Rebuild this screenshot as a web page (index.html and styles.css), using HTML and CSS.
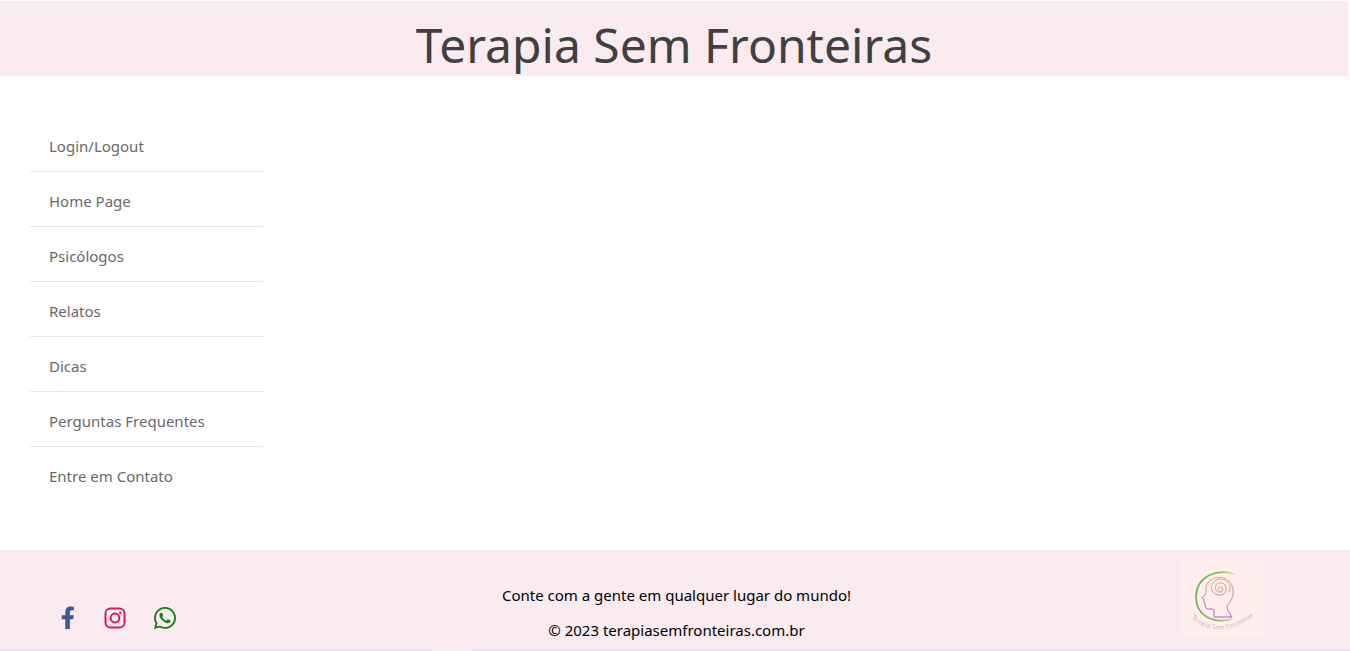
FILE: index.html
```html
<!DOCTYPE html>
<html lang="pt-BR">
<head>
<meta charset="utf-8">
<title>Terapia Sem Fronteiras</title>
<link rel="stylesheet" href="styles.css">
</head>
<body>
<header class="site-header"><h1 class="site-title">Terapia Sem Fronteiras</h1></header>
<main class="content">
  <nav class="menu">
    <a class="menu-link" href="#">Login/Logout</a>
    <a class="menu-link" href="#">Home Page</a>
    <a class="menu-link" href="#">Psicólogos</a>
    <a class="menu-link" href="#">Relatos</a>
    <a class="menu-link" href="#">Dicas</a>
    <a class="menu-link" href="#">Perguntas Frequentes</a>
    <a class="menu-link" href="#">Entre em Contato</a>
  </nav>
</main>
<footer class="site-footer">
  <div class="social">
    <a class="social-link facebook" href="#" aria-label="Facebook">
      <svg width="14" height="24" viewBox="0 0 14 24"><path fill="currentColor" d="M4.300 23V13.200H.7V9.200h3.600V6.100C4.300 2.500 6.400.5 9.700.5c1.500 0 3.200.3 3.200.3v3.500h-1.800c-1.800 0-2.300 1.100-2.300 2.200v2.700h4l-.6 4H8.800V23z"/></svg>
    </a>
    <a class="social-link" href="#" aria-label="Instagram">
      <svg class="instagram" width="22" height="22" viewBox="0 0 22 22"><g fill="none" stroke="currentColor" stroke-width="2"><rect x="1.500" y="1.500" width="19" height="19" rx="5"/><circle cx="11" cy="11" r="4.400"/></g><circle cx="16.300" cy="5.700" r="1.300" fill="currentColor"/></svg>
    </a>
    <a class="social-link" href="#" aria-label="WhatsApp">
      <svg class="whatsapp" width="22" height="22" viewBox="0 32 448 448"><path fill="currentColor" d="M380.900 97.100C339 55.100 283.200 32 223.900 32c-122.400 0-222 99.600-222 222 0 39.100 10.200 77.300 29.600 111L0 480l117.700-30.900c32.400 17.700 68.900 27 106.100 27h.1c122.300 0 224.100-99.600 224.100-222 0-59.300-25.200-115-67.100-157zm-157 341.600c-33.200 0-65.700-8.900-94-25.700l-6.700-4-69.800 18.300L72 359.200l-4.400-7c-18.500-29.400-28.200-63.300-28.200-98.200 0-101.700 82.800-184.500 184.600-184.500 49.300 0 95.600 19.200 130.400 54.100 34.800 34.900 56.200 81.200 56.100 130.500 0 101.800-84.900 184.600-186.600 184.600zm101.200-138.200c-5.500-2.800-32.800-16.200-37.900-18-5.100-1.900-8.800-2.800-12.500 2.800-3.700 5.600-14.300 18-17.600 21.800-3.200 3.700-6.500 4.200-12 1.400-32.600-16.300-54-29.100-75.500-66-5.700-9.800 5.700-9.100 16.300-30.300 1.800-3.700.9-6.900-.5-9.700-1.400-2.800-12.500-30.100-17.100-41.200-4.500-10.800-9.100-9.300-12.500-9.500-3.200-.2-6.900-.2-10.600-.2-3.700 0-9.700 1.400-14.800 6.900-5.100 5.600-19.400 19-19.400 46.300 0 27.300 19.900 53.700 22.600 57.400 2.800 3.700 39.100 59.700 94.800 83.800 35.200 15.200 49 16.500 66.600 13.900 10.700-1.600 32.800-13.400 37.400-26.400 4.600-13 4.600-24.100 3.200-26.400-1.300-2.500-5-3.900-10.500-6.600z"/></svg>
    </a>
  </div>
  <div class="footer-text">
    <p class="footer-line">Conte com a gente em qualquer lugar do mundo!</p>
    <p class="footer-line">© 2023 terapiasemfronteiras.com.br</p>
  </div>
  <svg class="logo" width="82" height="78" viewBox="0 0 82 78" role="img" aria-label="Terapia Sem Fronteiras">
    <defs>
      <linearGradient id="ring" gradientUnits="userSpaceOnUse" x1="14" x2="54" y1="0" y2="0"><stop offset="0" stop-color="#5cc04c"/><stop offset=".6" stop-color="#80c660"/><stop offset="1" stop-color="#f4dcc0"/></linearGradient>
      <linearGradient id="head" gradientUnits="userSpaceOnUse" x1="0" x2="0" y1="16" y2="58"><stop offset="0" stop-color="#deb267"/><stop offset=".5" stop-color="#c08799"/><stop offset="1" stop-color="#a05dce"/></linearGradient>
      <path id="arc" d="M9 58Q40 84 76 52"/>
    </defs>
    <rect width="82" height="78" fill="#ffeeed"/>
    <path d="M53 14C34 8 14 17 14 37c0 19 17 27 36 22" fill="none" stroke="url(#ring)" stroke-width="1.700"/>
    <g fill="none" stroke="url(#head)" stroke-width="1">
      <path d="M50 57l-3-5c-3-4-2-7 1-10 5-7 4-16-1-21-7-6-18-4-22 3-2 4 0 8-2 11l-3 3 2 1v3l1 1v3l2 3h6l1 2v6z"/>
      <path d="M37 30c-1-2 0-4 2-3 3 1 2 5-1 5-4 0-6-4-4-7 3-4 10-2 10 3 1 5-4 8-8 7-6-1-8-8-5-12 4-6 13-5 16 1 2 3 1 6 0 8"/>
    </g>
    <text class="logo-text"><textPath href="#arc">Terapia Sem Fronteiras</textPath></text>
  </svg>
</footer>
</body>
</html>
```
FILE: styles.css
```css
* { box-sizing: border-box; }
body {
  margin: 0;
  min-height: 100vh;
  display: flex;
  flex-direction: column;
  background: #fff;
  font-family: "Trebuchet MS", "Noto Sans", sans-serif;
  font-size: 15px;
}
.site-header {
  margin: 1px 2px 0 0;
  padding: 14px 0 1px;
  background: #faebf0;
}
.site-title {
  margin: 0;
  text-align: center;
  font-size: 48px;
  line-height: 60px;
  font-weight: 400;
  color: #404040;
}
.content { flex: 1; padding: 41px 30px 40px; }
.menu { width: 233px; }
.menu-link {
  display: block;
  padding: 15px 19px 11px;
  line-height: 28px;
  color: #696969;
  text-decoration: none;
  border-bottom: 1px solid #e6e6e6;
}
.menu-link:last-child { border-bottom: 0; }
.site-footer {
  display: grid;
  grid-template-columns: 1fr auto 1fr;
  align-items: start;
  padding: 10px 57px 3px 60px;
  background: linear-gradient(90deg, #e4d9ec 32%, #f8f0f8 32%, #f8f0f8 35%, #e4d9ec 35%) bottom / 100% 1px no-repeat #faebf0;
}
.social { display: flex; gap: 28px; padding-top: 46px; }
.social-link { display: flex; height: 24px; align-items: center; }
.facebook { width: 16px; justify-content: center; color: #3b5998; }
.instagram { color: #d81b60; }
.whatsapp { color: #128012; }
.footer-text { padding-top: 18px; text-align: center; color: #000; }
.footer-line { margin: 0; line-height: 35px; }
.logo { display: block; justify-self: end; margin-right: 29px; }
.logo-text { font-family: Lato, sans-serif; font-size: 7px; font-weight: 300; fill: #a09a9f; }
```
